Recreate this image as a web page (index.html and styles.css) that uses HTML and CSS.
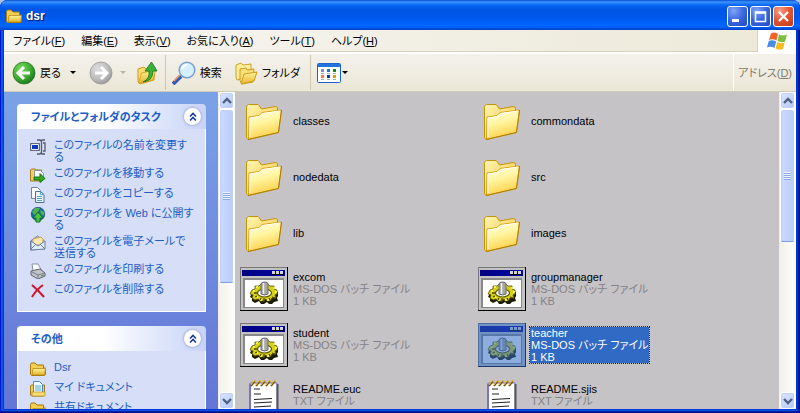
FILE: index.html
```html
<!DOCTYPE html>
<html lang="ja">
<head>
<meta charset="utf-8">
<title>dsr</title>
<link rel="stylesheet" href="styles.css">
</head>
<body>
<svg class="defs" aria-hidden="true">
  <defs>
    <linearGradient id="gFolder" x1="0" y1="0" x2="0.3" y2="1"><stop offset="0" stop-color="#fffff0"/><stop offset=".5" stop-color="#fff5a0"/><stop offset="1" stop-color="#ffd04c"/></linearGradient>
    <linearGradient id="gFolderBack" x1="0" y1="0" x2="1" y2="1"><stop offset="0" stop-color="#fff6b0"/><stop offset="1" stop-color="#f2bf38"/></linearGradient>
    <radialGradient id="gGreen" cx=".35" cy=".3" r=".8"><stop offset="0" stop-color="#7bd65c"/><stop offset=".55" stop-color="#3fae35"/><stop offset="1" stop-color="#146e14"/></radialGradient>
    <radialGradient id="gGrey" cx=".35" cy=".3" r=".8"><stop offset="0" stop-color="#dcdcdc"/><stop offset=".6" stop-color="#bdbdbd"/><stop offset="1" stop-color="#929292"/></radialGradient>
    <linearGradient id="gTitle"><stop offset="0" stop-color="#000080"/><stop offset="1" stop-color="#0000a8"/></linearGradient>
    <linearGradient id="gYellow" x1="0" y1="0" x2="0" y2="1"><stop offset="0" stop-color="#fff29a"/><stop offset="1" stop-color="#e8b62e"/></linearGradient>
    <symbol id="folder" viewBox="0 0 48 48">
      <path d="M6.500 11V9L8.500 7.500h9.500l1.500 1.500 2 3 14-2.500 2 1v3l3.500 0-3 21L8 42.500l-1.500-2z" fill="url(#gFolderBack)" stroke="#c69408"/>
      <path d="M9 20l10-1.500 3-3 19.500-2.500-3 22.500L8.500 42.500z" fill="url(#gFolder)" stroke="#d8a210"/>
      <path d="M38.500 35.500 41.500 13M8 42.500l30.500-7" stroke="#b07c00" fill="none"/>
      <path d="M10 40V21l9.500-1.500 3-3 17.500-2.500" stroke="#fffef0" fill="none"/>
    </symbol>
    <symbol id="batch" viewBox="0 0 48 44">
      <path d="M0 0h48v44H0z" fill="#000"/><path d="M0 0h47v43H0z" fill="#777"/><path d="M1 1h46v42H1z" fill="#c3c3c3"/>
      <path d="M2 3h43v6H2z" fill="url(#gTitle)"/>
      <path d="M32 4h3v3h-3zM36 4h3v3h-3zM40 4h3v3h-3z" fill="#d4d4d4"/><path d="M32 7h12v1H32z" fill="#000"/>
      <path d="M3 11h41v30H3z" fill="#888"/><path d="M5 13h38v27H5z" fill="#fff"/>
      <path d="M12 26l3-1 1-4 4 1 2-3h6l1 3 4-1 2 3 3 1v4l-1 2 1 3-4 1-2 2h-3l-2-2-3 2h-3l-2-3-4 2-3-2 0-3-2-1z" fill="#1b1b00"/>
      <path d="M12 23l3-1 0-3 4 0 2-2h7l2 2 4 0 0 3 3 1v4l-2 1 1 3-4 0-2 3h-3l-1-2-3 2h-3l-2-2-3 1-3-2 1-3-3-1z" fill="#d8d018" stroke="#555000" stroke-width=".8"/>
      <path d="M13 24h2M16 20h2M33 21h2M35 25h2M20 33h2M27 33h2M17 30h1" stroke="#ffff70" stroke-width="1.500"/>
      <ellipse cx="24.500" cy="26" rx="7" ry="4" fill="#fff" stroke="#585800" stroke-width="1.200"/>
      <path d="M15 30l2-1M32 30l3 1M24 31v4M14 26h3M21 31l-1 2M29 31l1 2" stroke="#4c4800" stroke-width="1.300"/>
      <path d="M21 17q0-2 3.500-2t3.500 2v10q-3.500 2-7 0z" fill="#a8a8a8" stroke="#666"/><path d="M23.500 16v11" stroke="#eee" stroke-width="1.500"/>
    </symbol>
    <symbol id="text" viewBox="0 0 48 48">
      <path d="M10 6h27v41H10z" fill="#fff" stroke="#7774c8"/><path d="M37.500 7v40" stroke="#555" stroke-width="2"/><path d="M10 7v40" stroke="#7774c8" stroke-width="2"/>
      <path d="M11 9l4-5M16 9l4-5M21 9l4-5M26 9l4-5M31 9l4-5" stroke="#765200" stroke-width="2"/>
      <path d="M11 8l3-4h2M16 8l3-4h2M21 8l3-4h2M26 8l3-4h2M31 8l3-4h2" stroke="#efb91c" fill="none"/>
      <path d="M14 12h6M14 17h7M14 22.500l18-1M14 26l18-1M14 30l17-1" stroke="#222" stroke-width="1.200"/>
    </symbol>
    <symbol id="mini" viewBox="0 0 16 16">
      <path d="M.5 13.500v-10q0-1.500 1.500-1.500h3l2 2h6.500v3h2v6.500l-1 1H1.500z" fill="#f5cd53" stroke="#a37a0c"/>
      <path d="M3 7.500h12.500l-1 6.500H2z" fill="url(#gYellow)" stroke="#b98c12" stroke-width=".8"/>
    </symbol>
    <symbol id="up" viewBox="0 0 12 12"><path d="M3 5.500l3-3 3 3M3 9.500l3-3 3 3" fill="none" stroke="#173a9c" stroke-width="1.600"/></symbol>
    <symbol id="chev" viewBox="0 0 10 8"><path d="M1 6l4-4 4 4" fill="none" stroke="#4d6185" stroke-width="2.400"/></symbol>
  </defs>
</svg>
<div class="window">
  <header class="titlebar">
    <svg class="title-icon"><use href="#mini"/></svg>
    <h1>dsr</h1>
    <button class="win-btn" aria-label="最小化"><svg viewBox="0 0 19 19"><path d="M4 12h7v3H4z" fill="#fff"/></svg></button>
    <button class="win-btn" aria-label="最大化"><svg viewBox="0 0 19 19"><path d="M4.500 5h10v9.500h-10zM4 6h11" fill="none" stroke="#fff" stroke-width="1.500"/></svg></button>
    <button class="win-btn close" aria-label="閉じる"><svg viewBox="0 0 19 19"><path d="M5 5l9 9M14 5l-9 9" stroke="#fff" stroke-width="2.200"/></svg></button>
  </header>
  <nav class="menubar">
    <button>ファイル(<u>F</u>)</button>
    <button>編集(<u>E</u>)</button>
    <button>表示(<u>V</u>)</button>
    <button>お気に入り(<u>A</u>)</button>
    <button>ツール(<u>T</u>)</button>
    <button>ヘルプ(<u>H</u>)</button>
    <div class="flag"><svg viewBox="0 0 20 18">
      <path d="M4 1.500q3-2 7 .5L9.500 8.500Q5.500 6.500 2 8z" fill="#f2642e"/><path d="M12 2.500q4 2 8 .3L18 9.500q-3.500 1.500-7.500-.5z" fill="#7cbf3d"/><path d="M1.700 9q3.500-1.800 7.500.5L7.500 16Q4 14 0 15.500z" fill="#4b8be8"/><path d="M10.200 10q4 2 7.500.5L16 17q-4 1.500-7.500-.5z" fill="#f7bd22"/>
    </svg></div>
  </nav>
  <div class="toolbar">
    <button class="tool back"><svg class="i24" viewBox="0 0 24 24"><circle cx="12" cy="12" r="11" fill="url(#gGreen)" stroke="#2b7a2b" stroke-width=".8"/><path d="M12 6l-6 6 6 6M6.500 12H18" fill="none" stroke="#fff" stroke-width="3"/></svg><span>戻る</span></button>
    <button class="drop" aria-label="戻る履歴"></button>
    <button class="tool forward" aria-label="進む" disabled><svg class="i24" viewBox="0 0 24 24"><circle cx="12" cy="12" r="11" fill="url(#gGrey)" stroke="#999" stroke-width=".8"/><path d="M12 6l6 6-6 6M17.500 12H6" fill="none" stroke="#fff" stroke-width="3"/></svg></button>
    <button class="drop off" aria-label="進む履歴" disabled></button>
    <button class="tool parent" aria-label="上へ"><svg class="i24" viewBox="0 0 24 24"><path d="M3 21V8l6-2 2 2 9-2-1 13-14 4z" fill="#f9dd74" stroke="#cf9a16"/><path d="M3.500 22l3-10 14-3-2.500 10z" fill="url(#gYellow)" stroke="#d7a422"/><path d="M8 21q7-3 6-11h-4l6.500-9L22 10h-4q0 10-10 11z" fill="#38b438" stroke="#167016" stroke-width=".8"/></svg></button>
    <span class="sep"></span>
    <button class="tool"><svg class="i24" viewBox="0 0 24 24"><path d="M1 23l8-8" stroke="#335bb8" stroke-width="4"/><path d="M2 20l6-6" stroke="#ee9860" stroke-width="1.500"/><circle cx="15" cy="9" r="7.800" fill="#d4effd" stroke="#7c9fd2" stroke-width="1.500"/><path d="M10 8q1-4 5-4" stroke="#fff" stroke-width="2" fill="none"/></svg><span>検索</span></button>
    <button class="tool folders"><svg class="i24" viewBox="0 0 24 24"><path d="M2 16V4l5-2 2 2 8-1v13L3 19z" fill="#ffed99" stroke="#d3a129"/><path d="M6 20V8l6-1 1 2 7-1-1 13-11 2z" fill="#fae078" stroke="#cb981c"/><path d="M7 23l3-10 13-2-3 9z" fill="url(#gYellow)" stroke="#d09d20"/></svg><span>フォルダ</span></button>
    <span class="sep"></span>
    <button class="tool views" aria-label="表示"><svg class="i24" viewBox="0 0 24 20"><rect x=".5" y=".5" width="23" height="19" rx="1" fill="#fff" stroke="#1c62cc"/><path d="M1 1h22v3H1z" fill="#2373df"/><path d="M4 6h3v3H4z" fill="#8c88c4"/><path d="M10 6h3v3h-3z" fill="#1778db"/><path d="M16 6h3v3h-3z" fill="#108c1c"/><path d="M4 12h3v3H4z" fill="#ff784d"/><path d="M10 12h3v3h-3z" fill="#1436a0"/><path d="M16 12h3v3h-3z" fill="#d1a211"/><path d="M4 10.500h3M10 10.500h3M16 10.500h3M4 16.500h3M10 16.500h3M16 16.500h3" stroke="#aaa"/></svg></button>
    <button class="drop near" aria-label="表示の種類"></button>
    <div class="address">アドレス(<u>D</u>)</div>
  </div>
  <div class="content">
    <aside class="sidebar">
      <section class="panel">
        <header><h2>ファイルとフォルダのタスク</h2><button class="fold" aria-label="折りたたむ"><svg><use href="#up"/></svg></button></header>
        <ul>
          <li><svg viewBox="0 0 16 16"><path d="M.5 4.500h9v7h-9z" fill="#063bbd" stroke="#667"/><path d="M1.500 5.500h7v5h-7z" fill="none" stroke="#eef"/><path d="M7 1h3l1 1 1-1h3M11.500 2v12M7 15h3l1-1 1 1h3M13 4h2v8h-2" fill="none" stroke="#555b68" stroke-width="1.300"/></svg><a href="#">このファイルの名前を変更す<br>る</a></li>
          <li><svg viewBox="0 0 16 16"><path d="M.5 14V3l1-1h4l1 1h5v11z" fill="#f2cf5c" stroke="#a27d20"/><path d="M4.500 3.500h6l3 3V12h-9z" fill="#fff" stroke="#8594a8"/><path d="M4 10h6V6.500l5 5-5 4V13H4z" fill="#35ac28" stroke="#167014"/></svg><a href="#">このファイルを移動する</a></li>
          <li><svg viewBox="0 0 16 16"><path d="M1.500.5h6l3 3v8h-9z" fill="#fff" stroke="#7183a0"/><path d="M5.500 4.500h5l3.500 3v8H5.500z" fill="#eaf6ff" stroke="#536b93"/><path d="M10.500 4.500v3H14M7 9.500h5M7 11.500h5M7 13.500h5" fill="none" stroke="#4ba5cd"/></svg><a href="#">このファイルをコピーする</a></li>
          <li><svg viewBox="0 0 16 16"><circle cx="8" cy="7" r="6.800" fill="#1766a8" stroke="#0b4370" stroke-width=".6"/><path d="M2 5l3-4 5 0-2 4-4 3zM10 3l4 2v4l-3-2z" fill="#50b34c"/><path d="M6 15v-4H3l5-6 5 6h-3v4z" fill="#43c93b" stroke="#146f24"/></svg><a href="#">このファイルを Web に公開す<br>る</a></li>
          <li><svg viewBox="0 0 16 16"><path d="M.5 6l7-5 7 5v8l-14 1z" fill="#b9d3f5" stroke="#6c7fa3"/><path d="M3 4l8-2 2 2v6H3z" fill="#ffe9ae" stroke="#cf9b4c"/><path d="M1 6l7 5 7-5v8L1 15z" fill="#e1effd" stroke="#6c7fa3"/><path d="M1 14l5-5M15 14l-5-5" stroke="#6c7fa3"/></svg><a href="#">このファイルを電子メールで<br>送信する</a></li>
          <li><svg viewBox="0 0 16 16"><path d="M3 8L2 1h6l4 7z" fill="#fff" stroke="#8992a5"/><path d="M1 8l9-2 5 4v3l-7 3-7-4z" fill="#c1c4ca" stroke="#60636b"/><path d="M2 9l6 3 7-2M8 12v3" fill="none" stroke="#777b84"/><path d="M11 13l3-1" stroke="#43a543"/></svg><a href="#">このファイルを印刷する</a></li>
          <li><svg viewBox="0 0 16 16"><path d="M2 2q6 5 12 12M13 2Q6 7 2 14" stroke="#d2142f" stroke-width="2" fill="none"/></svg><a href="#">このファイルを削除する</a></li>
        </ul>
      </section>
      <section class="panel">
        <header><h2>その他</h2><button class="fold" aria-label="折りたたむ"><svg><use href="#up"/></svg></button></header>
        <ul>
          <li><svg><use href="#mini"/></svg><a href="#">Dsr</a></li>
          <li><svg viewBox="0 0 16 16"><path d="M.5 14V5l1-1h13v10l-1 1h-12z" fill="#f4cd59" stroke="#a27b18"/><path d="M3.500.5h6l3 3V13h-9z" fill="#f0faff" stroke="#4d89c6"/><path d="M5 5h6M5 7h6M5 9h6" stroke="#58a9d9"/><path d="M2 11h13v4H2z" fill="#f8dc75" stroke="#b58c20" stroke-width=".7"/></svg><a href="#">マイ ドキュメント</a></li>
          <li><svg><use href="#mini"/></svg><a href="#">共有ドキュメント</a></li>
        </ul>
      </section>
    </aside>
    <div class="scroll side-scroll">
      <button class="arrow" aria-label="上へスクロール"><svg><use href="#chev"/></svg></button>
      <div class="thumb"><i></i></div>
      <button class="arrow down" aria-label="下へスクロール"><svg><use href="#chev"/></svg></button>
    </div>
    <main>
      <ul class="files">
        <li><svg><use href="#folder"/></svg><p>classes</p></li>
        <li><svg><use href="#folder"/></svg><p>commondata</p></li>
        <li><svg><use href="#folder"/></svg><p>nodedata</p></li>
        <li><svg><use href="#folder"/></svg><p>src</p></li>
        <li><svg><use href="#folder"/></svg><p>lib</p></li>
        <li><svg><use href="#folder"/></svg><p>images</p></li>
        <li><svg><use href="#batch"/></svg><p>excom<span>MS-DOS バッチ ファイル</span><span>1 KB</span></p></li>
        <li><svg><use href="#batch"/></svg><p>groupmanager<span>MS-DOS バッチ ファイル</span><span>1 KB</span></p></li>
        <li><svg><use href="#batch"/></svg><p>student<span>MS-DOS バッチ ファイル</span><span>1 KB</span></p></li>
        <li class="selected"><div class="tint"><svg><use href="#batch"/></svg></div><p>teacher<span>MS-DOS バッチ ファイル</span><span>1 KB</span></p></li>
        <li><svg><use href="#text"/></svg><p>README.euc<span>TXT ファイル</span><span>2 KB</span></p></li>
        <li><svg><use href="#text"/></svg><p>README.sjis<span>TXT ファイル</span><span>2 KB</span></p></li>
      </ul>
    </main>
    <div class="scroll main-scroll">
      <button class="arrow" aria-label="上へスクロール"><svg><use href="#chev"/></svg></button>
      <div class="thumb"><i></i></div>
      <button class="arrow down" aria-label="下へスクロール"><svg><use href="#chev"/></svg></button>
    </div>
  </div>
</div>
</body>
</html>
```
FILE: styles.css
```css
* { box-sizing: border-box; }
body {
  margin: 0;
  font: 11px/12px "Liberation Sans", "Noto Sans CJK JP", sans-serif;
  font-feature-settings: "palt";
  color: #000;
  background: #a9c0ee;
}
h1, h2, p, ul { margin: 0; padding: 0; }
ul { list-style: none; }
svg { display: block; flex: none; }
button { font: inherit; font-feature-settings: inherit; color: inherit; border: 0; padding: 0; background: none; }
.defs { position: absolute; width: 0; height: 0; }

.window {
  display: flex;
  flex-direction: column;
  height: 100vh;
  overflow: hidden;
  padding: 0 4px 4px;
  border-radius: 8px 8px 0 0;
  background: #0036d8;
  box-shadow: inset -1px -1px 0 #00138c, inset 1px 0 0 #0019cf, inset -2px -2px 0 #001ea0, inset 3px -3px 0 #0855e8;
}

.titlebar {
  display: flex;
  align-items: center;
  gap: 2px;
  height: 30px;
  flex: none;
  margin: 0 -4px;
  padding: 2px 6px 0;
  background: linear-gradient(#0a4ed0 0, #3a94ff 2px, #0a68f4 5px, #0055e5 9px, #0058ec 18px, #0066ff 25px, #0060fa 27px, #0040c4 30px);
}
.title-icon { width: 16px; height: 16px; }
.titlebar h1 {
  flex: 1;
  padding-left: 2px;
  font-size: 12px;
  line-height: 16px;
  color: #fff;
  text-shadow: 1px 1px 1px #00136b;
}
.win-btn {
  width: 21px;
  height: 21px;
  border: 1px solid #fff;
  border-radius: 3px;
  background: radial-gradient(circle at 30% 20%, #7fa4f4, #3a66de 50%, #2048c8);
}
.win-btn.close { background: radial-gradient(circle at 30% 20%, #f2a08a, #e2532f 50%, #c23a12); }
.win-btn svg { width: 19px; height: 19px; }

.menubar {
  display: flex;
  align-items: center;
  gap: 16px;
  height: 24px;
  flex: none;
  padding-left: 9px;
  border-bottom: 2px solid #fff;
  background: linear-gradient(90deg, #f8f6f3, #ece9d8);
  box-shadow: inset 0 -1px 0 #d8d2bd;
}
.flag {
  display: flex;
  align-items: center;
  justify-content: center;
  align-self: stretch;
  width: 39px;
  margin-left: auto;
  border-left: 1px solid #d8d2bd;
  background: #fff;
}
.flag svg { width: 20px; height: 18px; }

.toolbar {
  display: flex;
  align-items: center;
  height: 38px;
  flex: none;
  padding-left: 8px;
  border-bottom: 1px solid #d0cbb6;
  background: linear-gradient(#f4f1ec, #ebe7d6);
}
.tool { display: flex; align-items: center; gap: 4px; }
.i24 { width: 24px; height: 24px; }
.drop { width: 8px; height: 24px; margin: 0 12px 0 8px; display: flex; align-items: center; justify-content: center; }
.drop::before { content: ""; border: 3px solid transparent; border-top-color: #000; border-bottom: 0; }
.drop.off { margin: 0 8px 0 6px; }
.drop.off::before { border-top-color: #b8b4a4; }
.drop.near { margin: 0; }
.sep { width: 1px; align-self: stretch; margin: 1px 6px; background: #cdc8b2; }
.folders { margin: 0 4px 0 12px; }
.views svg { height: 20px; }
.address {
  display: flex;
  align-items: center;
  align-self: stretch;
  margin-left: auto;
  padding: 0 4px;
  border-left: 1px solid #fff;
  color: #7d7a6c;
}

.content { display: flex; flex: 1; min-height: 0; background: #c6c3c6; }
.sidebar {
  width: 214px;
  flex: none;
  overflow: hidden;
  padding: 12px 12px 0 13px;
  background: linear-gradient(#7ba2e7, #6375d6);
}
.panel {
  margin-bottom: 14px;
  color: #215dc6;
}
.panel header {
  display: flex;
  align-items: center;
  justify-content: space-between;
  height: 25px;
  padding: 0 5px 0 14px;
  border-radius: 4px 4px 0 0;
  background: linear-gradient(90deg, #fff 45%, #c6d3f7);
}
.panel h2 { font-size: 11px; line-height: 16px; white-space: nowrap; }
.fold {
  display: grid;
  place-items: center;
  width: 17px;
  height: 17px;
  border-radius: 50%;
  background: #fff;
  box-shadow: 0 0 2px 1px #a9b3da;
}
.fold svg { width: 12px; height: 12px; }
.panel ul {
  display: grid;
  gap: 4px;
  padding: 10px 0 12px 12px;
  border: 1px solid #fff;
  border-top: 0;
  background: #d6dff7;
}
.panel li { display: flex; gap: 8px; min-height: 16px; }
.panel li svg { width: 16px; height: 16px; }
.panel a { color: inherit; text-decoration: none; white-space: nowrap; }

.scroll {
  display: flex;
  flex-direction: column;
  width: 17px;
  flex: none;
  padding: 0 1px;
  background: linear-gradient(90deg, #f2f0ea, #fefefc);
}
.arrow, .thumb {
  display: grid;
  place-items: center;
  border: 1px solid #fff;
  border-radius: 3px;
  background: linear-gradient(135deg, #dce6ff, #b4c8f6);
  box-shadow: inset 0 0 0 1px #c0d0f8;
}
.arrow { height: 17px; flex: none; }
.arrow svg { width: 10px; height: 8px; }
.down { margin-top: auto; }
.down svg { transform: rotate(180deg); }
.thumb { background: linear-gradient(90deg, #cbdafe, #bacdfa); border-bottom-color: #7f9fe0; }
.thumb i { width: 7px; height: 8px; background: repeating-linear-gradient(#eef4ff 0 1px, #8caae6 1px 2px); }
.side-scroll .thumb { flex: 0 0 55%; }
.main-scroll .thumb { flex: 0 0 42%; }

main { flex: 1; min-width: 0; overflow: hidden; }
.files {
  display: grid;
  grid-template-columns: repeat(auto-fill, 238px);
  grid-auto-rows: 56px;
  padding: 1px 0 0 5px;
}
.files li { display: flex; align-items: center; gap: 4px; }
.files svg { width: 48px; height: 48px; }
.files p { padding: 0 1px; white-space: nowrap; }
.files span { display: block; color: #848284; }
.selected p { background: #316ac5; color: #fff; outline: 1px dotted #222; }
.files .selected span { color: #fff; }
.tint { position: relative; }
.tint::after { content: ""; position: absolute; inset: 2px 0; background: #316ac5; opacity: .55; }
```
